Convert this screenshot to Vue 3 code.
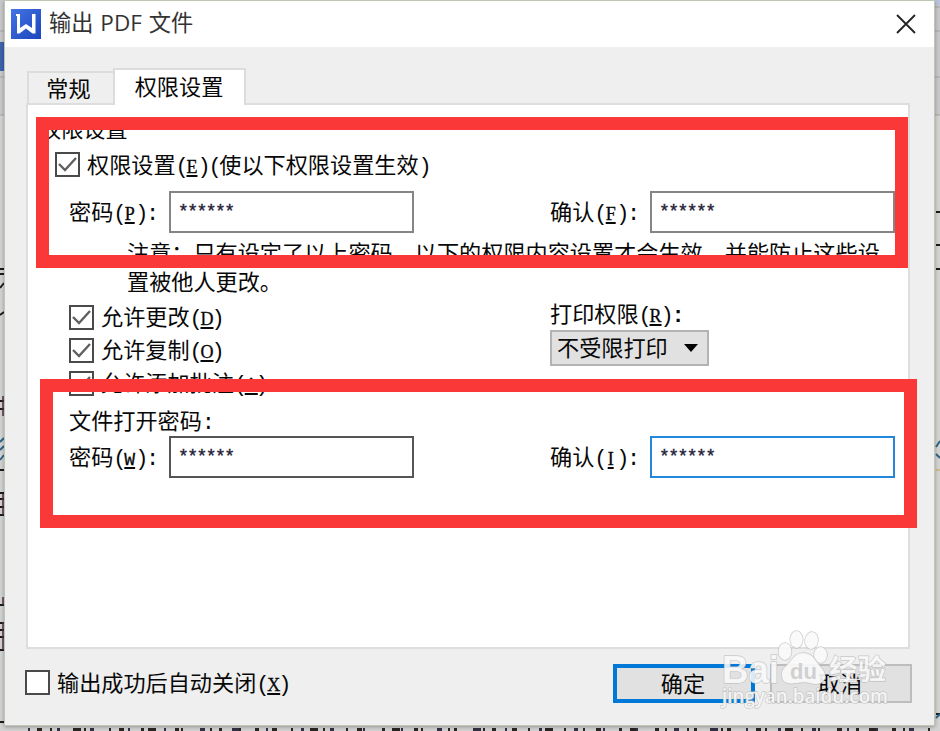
<script setup>
import { ref, reactive } from 'vue';

const tabs = ['常规', '权限设置'];
const activeTab = ref(1);

const options = reactive([
  { label: '允许更改', key: 'D', checked: true },
  { label: '允许复制', key: 'O', checked: true },
  { label: '允许添加批注', key: 'A', checked: true }
]);

const editFields = [
  { label: '密码', key: 'P' },
  { label: '确认', key: 'F' }
];
const openFields = [
  { label: '密码', key: 'W', dark: true },
  { label: '确认', key: 'I', focused: true }
];

const enabled = ref(true);
const autoClose = ref(false);

// 对话框后面文档露出的零碎笔画
const marks = [];
for (let x = 28, i = 0; x < 936; i++) {
  marks.push({ x, w: [2, 5, 2, 3, 8, 2, 4][i % 7], c: i % 3 === 0 ? '#343044' : '#292522' });
  x += [9, 13, 7, 16, 11, 6, 19, 10][i % 8];
}
</script>

<template>
  <div class="desktop">
    <svg class="document" width="940" height="731" viewBox="0 0 940 731">
      <rect width="940" height="115" fill="#c9c9cc" />
      <path d="M0 31H5M0 77H5M0 115H5M935 7H940M935 31H940M935 77H940M935 115H940" stroke="#a5a5aa" />
      <rect y="42" width="5" height="29" fill="#3d64ae" />
      <rect x="935" width="5" height="5" fill="#b9c5df" />
      <path d="M0 269H4M0 274H4M0 288L4 283M0 315L4 312M0 605H4M0 722H4M0 401H4M0 409H4M0 470H4M0 493H4M0 499H4M0 507H4M0 515H4M0 623H4M0 630H4M0 637H4M0 650H4M936 212H940M936 245H940M936 269H940M936 714H940" stroke="#1d1a1c" stroke-width="2" />
      <path d="M3 396V416M3 597V605M3 494V515M3 622V650" stroke="#50304a" stroke-width="1.5" />
      <path d="M0 442L4 438M0 450L4 446M0 460L4 455M936 447L940 441M936 454L940 458M936 718L940 714" stroke="#2f6587" stroke-width="2" />
      <path d="M936 470H940" stroke="#d4a53c" />
      <rect v-for="m in marks" :key="m.x" :x="m.x" y="728" :width="m.w" height="3" :fill="m.c" />
    </svg>

    <div class="dialog">
      <header class="titlebar">
        <svg class="logo" width="30" height="30" viewBox="0 0 30 30">
          <defs>
            <linearGradient id="logo" x1="0" y1="0" x2="1" y2="1">
              <stop offset="0" stop-color="#4474e4" />
              <stop offset="1" stop-color="#1b45bd" />
            </linearGradient>
          </defs>
          <rect width="30" height="30" fill="url(#logo)" />
          <path d="M5 5H9V19L15 15L21 19V5H24.500V24.500H21.500L15 19.500L8.500 24.500H6V7H5Z" fill="#fff" />
        </svg>
        <span class="title">输出 <span class="pdf">PDF</span> 文件</span>
        <svg class="close" width="20" height="20" viewBox="0 0 20 20">
          <path d="M1 1L19 19M19 1L1 19" stroke="#222" stroke-width="1.8" />
        </svg>
      </header>

      <nav class="tabs">
        <div v-for="(tab, idx) in tabs" :key="tab" class="tab" :class="{ active: activeTab === idx }" @click="activeTab = idx">{{ tab }}</div>
      </nav>

      <section class="panel">
        <div class="legend">权限设置</div>
        <div class="check-row main" @click="enabled = !enabled">
          <span class="box"><svg v-if="enabled" viewBox="0 0 21 21"><path d="M2 10L8 16L19 4" /></svg></span>
          <span class="text">权限设置<span class="key">(<u>E</u>)(</span>使以下权限设置生效<span class="key">)</span></span>
        </div>
        <div class="fields">
          <template v-for="f in editFields" :key="f.key">
            <span class="label">{{ f.label }}<span class="key">(<u>{{ f.key }}</u>):</span></span>
            <div class="input">******</div>
          </template>
        </div>
        <p class="note">注意：只有设定了以上密码，以下的权限内容设置才会生效，并能防止这些设<br>置被他人更改。</p>
        <div class="options">
          <div class="checks">
            <div v-for="o in options" :key="o.key" class="check-row" @click="o.checked = !o.checked">
              <span class="box"><svg v-if="o.checked" viewBox="0 0 21 21"><path d="M2 10L8 16L19 4" /></svg></span>
              <span class="text">{{ o.label }}<span class="key">(<u>{{ o.key }}</u>)</span></span>
            </div>
          </div>
          <div class="print">
            <div class="print-label">打印权限<span class="key">(<u>R</u>)<b>:</b></span></div>
            <div class="combo">
              <span>不受限打印</span>
              <svg width="14" height="8" viewBox="0 0 14 8"><path d="M0 0H14L7 8Z" fill="#000" /></svg>
            </div>
          </div>
        </div>
        <div class="heading">文件打开密码<span class="key">:</span></div>
        <div class="fields open">
          <template v-for="f in openFields" :key="f.key">
            <span class="label">{{ f.label }}<span class="key">(<u :class="{ narrow: f.key === 'W' }">{{ f.key }}</u>):</span></span>
            <div class="input" :class="{ dark: f.dark, focused: f.focused }">******</div>
          </template>
        </div>
      </section>

      <footer class="footer">
        <div class="check-row auto" @click="autoClose = !autoClose">
          <span class="box"><svg v-if="autoClose" viewBox="0 0 21 21"><path d="M2 10L8 16L19 4" /></svg></span>
          <span class="text">输出成功后自动关闭<span class="key">(<u>X</u>)</span></span>
        </div>
        <div class="btn primary">确定</div>
        <div class="btn">取消</div>
      </footer>
    </div>

    <div class="frame frame-top"></div>
    <div class="frame frame-bottom"></div>

    <svg class="watermark" width="180" height="84" viewBox="0 0 180 84">
      <g class="wm">
        <text x="5" y="56.5" class="wm-bai" textLength="57" lengthAdjust="spacingAndGlyphs">Bai</text>
        <ellipse cx="68" cy="25.500" rx="6.500" ry="8.500" />
        <ellipse cx="79.500" cy="13.500" rx="6.300" ry="8.500" />
        <ellipse cx="94.500" cy="14.500" rx="6.500" ry="8.500" transform="rotate(8 94.500 14.500)" />
        <ellipse cx="103.500" cy="29" rx="6.500" ry="8" />
        <path d="M86 27C79 27 76 32 72 37C67 42 64 44 65 51C66 58 74 58 80 57C85 56 89 56 93 57C100 59 108 58 108 50C108 44 103 41 99 35C96 30 92 27 86 27Z" />
        <text x="112" y="54" class="wm-cn" textLength="57" lengthAdjust="spacingAndGlyphs">经验</text>
        <text x="5" y="77" class="wm-url" textLength="166" lengthAdjust="spacingAndGlyphs">jingyan.baidu.com</text>
      </g>
      <text x="73" y="53" class="wm-du" textLength="27" lengthAdjust="spacingAndGlyphs">du</text>
    </svg>
  </div>
</template>

<style>
body {
  margin: 0;
  overflow: hidden;
}
</style>

<style scoped>
.desktop {
  position: relative;
  width: 940px;
  height: 731px;
  overflow: hidden;
  box-sizing: border-box;
  padding: 0 5px 0 4px;
  background: #d3d3d3;
  color: #080808;
  font-family: "Noto Sans CJK SC", sans-serif;
  font-size: 22.15px;
  line-height: 30px;
  white-space: nowrap;
}
.desktop * {
  box-sizing: border-box;
}
.document {
  position: absolute;
  left: 0;
  top: 0;
}
.dialog {
  position: relative;
  height: 726px;
  background: #efefef;
  border: 1px solid #bec6b4;
  box-shadow: 0 1px 4px rgba(0, 0, 0, 0.3);
}
.titlebar {
  display: flex;
  align-items: center;
  height: 46px;
  padding: 0 18px 0 6px;
  background: #fff;
}
.title {
  margin-left: 8px;
  padding-bottom: 4px;
  flex: 1;
  color: #333;
  font-size: 22.2px;
}
.pdf {
  font-family: "Open Sans", sans-serif;
  font-size: 22.5px;
  margin: 0 2px;
}
.tabs {
  display: flex;
  align-items: flex-end;
  height: 58px;
  padding-left: 22px;
  position: relative;
  z-index: 1;
}
.tab {
  width: 86px;
  height: 34px;
  border: 2px solid #dcdcdc;
  border-right: 0;
  border-bottom: 0;
  line-height: 29px;
  text-align: center;
  padding-right: 5px;
}
.tab.active {
  width: 133px;
  height: 37px;
  background: #fff;
  border: 2px solid #dcdcdc;
  border-bottom: 0;
  line-height: 30px;
  padding-right: 1px;
}
.panel {
  width: 884px;
  height: 546px;
  margin: -2px 0 0 21px;
  padding-left: 41px;
  background: #fff;
  border: 2px solid #dedede;
}
.legend {
  height: 38px;
  padding-top: 7px;
  margin-left: -30px;
}
.key {
  font-family: "Liberation Mono", monospace;
  font-size: 22px;
  line-height: 24px;
  letter-spacing: -2.300px;
}
.key u {
  font-family: "Liberation Serif", serif;
  font-size: 18px;
  letter-spacing: 0;
  display: inline-block;
  width: 11px;
  text-align: center;
  text-decoration-thickness: 2px;
  text-underline-offset: 2px;
  -webkit-text-stroke: 0.3px;
}
.key u.narrow {
  font-family: "Liberation Mono", monospace;
}
.check-row {
  display: flex;
  align-items: center;
  gap: 7px;
  height: 33px;
}
.check-row.main {
  height: 44px;
  margin-left: -14px;
}
.box {
  width: 25px;
  height: 25px;
  margin-bottom: 2px;
  border: 2px solid #4a4a4a;
  background: #fff;
  flex: none;
}
.box svg {
  display: block;
  width: 21px;
  height: 21px;
}
.box path {
  fill: none;
  stroke: #606060;
  stroke-width: 2.400;
}
.text {
  padding-bottom: 2px;
}
.checks .text {
  padding-bottom: 5px;
}
.fields {
  display: grid;
  grid-template-columns: 100px 245px 136px 100px 245px;
  align-items: center;
  height: 42px;
  margin-top: 4px;
}
.fields.open {
  margin-top: 0;
}
.label {
  padding-bottom: 3px;
}
.fields .label:nth-child(3) {
  grid-column: 4;
}
.input {
  height: 42px;
  border: 2px solid #858585;
  padding: 2px 7px;
  color: #241c38;
  font-family: "Liberation Mono", monospace;
  font-size: 18px;
  letter-spacing: -1.530px;
  line-height: 34px;
  -webkit-text-stroke: 0.4px;
}
.input.dark {
  border-color: #555;
}
.input.focused {
  border-color: #2388dc;
}
.note {
  margin: 4px 0 0 58px;
  line-height: 29px;
}
.options {
  display: flex;
  margin-top: 7px;
  height: 99px;
}
.checks {
  width: 481px;
}
.print-label {
  height: 28px;
  line-height: 20px;
}
.combo {
  display: flex;
  align-items: center;
  justify-content: space-between;
  width: 159px;
  height: 36px;
  padding: 0 9px 0 5px;
  background: #e1e1e1;
  border: 2px solid #b3b3b3;
}
.combo span {
  padding-bottom: 4px;
}
.heading {
  margin-top: 3px;
  height: 32px;
}
.footer {
  display: flex;
  align-items: flex-start;
  padding: 15px 22px 0 20px;
}
.auto {
  flex: 1;
  height: 38px;
}
.btn {
  width: 142px;
  height: 39px;
  margin-left: 15px;
  border: 2px solid #bdbdbd;
  background: #e1e1e1;
  text-align: center;
  line-height: 32px;
  padding-right: 2px;
}
.btn.primary {
  border: 4px solid #0078d7;
  line-height: 28px;
}
.frame {
  position: absolute;
  border: 13px solid #fb3838;
}
.frame-top {
  left: 36px;
  top: 117px;
  width: 872px;
  height: 151px;
}
.frame-bottom {
  left: 40px;
  top: 379px;
  width: 877px;
  height: 149px;
}
.watermark {
  position: absolute;
  left: 717px;
  top: 626px;
}
.wm {
  fill: #fafafa;
  fill-opacity: 0.9;
  stroke: #b8b8b8;
  stroke-opacity: 0.7;
  stroke-width: 1.400px;
  paint-order: stroke;
}
.wm-bai {
  font: bold 38px "Liberation Sans", sans-serif;
}
.wm-cn {
  font: bold 28px "Noto Sans CJK SC", sans-serif;
}
.wm-url {
  font: 600 19.500px "Open Sans", sans-serif;
}
.wm-du {
  font: bold 22px "Liberation Sans", sans-serif;
  fill: #d0d0d0;
}
</style>
